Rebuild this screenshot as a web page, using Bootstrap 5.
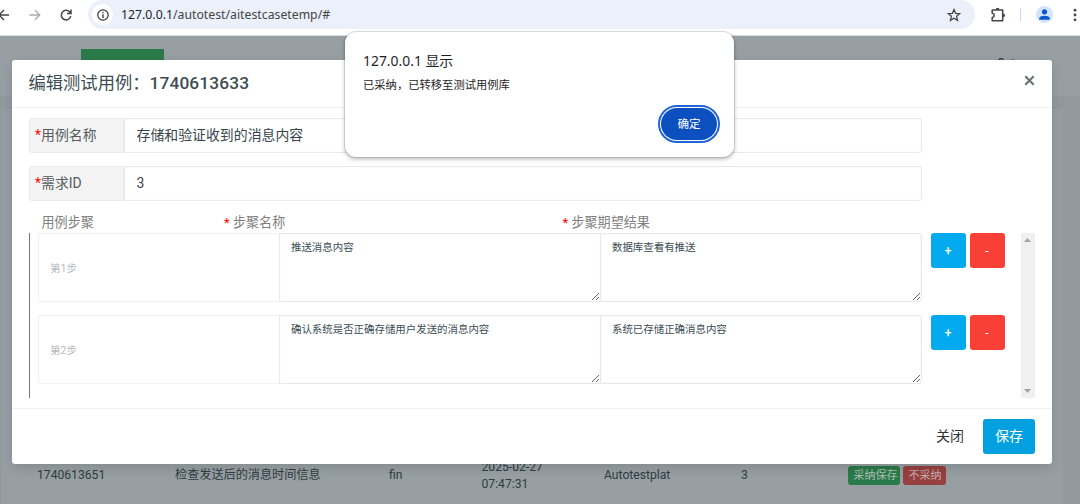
<!DOCTYPE html>
<html lang="zh-CN">
<head>
<meta charset="utf-8">
<title>编辑测试用例</title>
<link href="https://cdn.jsdelivr.net/npm/bootstrap@5.3.0/dist/css/bootstrap.min.css" rel="stylesheet">
<style>
  body{width:1080px;height:504px;overflow:hidden;background:#fff;font-family:Roboto,"Noto Sans CJK SC",sans-serif;font-size:12px;line-height:17px;color:#455a64}
  .browser-bar{height:36px;border-bottom:1px solid #d9dcdd;color:#444}
  .browser-bar svg{display:block;flex:none}
  .bar-row{height:29px}
  .address{margin-left:15px;width:887px;height:29px;border-radius:15px;background:#ebf0fa;font-family:"Noto Sans","Noto Sans CJK SC",sans-serif;font-size:12.280px}
  .site-info{width:21px;height:21px;background:#fff;margin-left:4px}
  .divider{width:1px;height:13px;background:#c5dbfb;margin-left:14px}
  .avatar{width:17px;height:17px;background:#d3e3fd;margin-left:15px}
  .page-area{height:468px;background:#979fa2}
  .top-nav{height:60px;padding:13px 0 0 81px}
  .active-tab{width:83px;height:47px;background:#2b7a49}
  .account{margin:9px 60px 0 0;color:#2c3539}
  .page-body{background:#929a9d;height:408px;padding:13px 17px 0 2px}
  .record-card{background:#979fa2;height:395px;padding-top:336px}
  .record-row{height:61px;color:#303c42;grid-template-columns:138px 214px 92.500px 122.500px 137px 106.500px 1fr;padding:0 0 0 35px;display:grid;align-items:center;font-size:12.150px}
  .mini{font-size:11px;line-height:17px;height:19px;border-radius:3px;padding:1px 4px 0 6px;color:#adc0b5;background:#2b7a49}
  .mini.no{background:#96403f;color:#c6acac}
  .edit-box{left:11.500px;top:60px;width:1040.500px;height:404px;border:0;border-radius:3px;box-shadow:0 4px 12px rgba(0,0,0,.13);background:#fff}
  .edit-box .modal-header{height:47.500px;padding:0 17px;border-bottom:1px solid #eff1f2}
  .edit-box .modal-title{font-size:17.300px;line-height:24px;color:#3e4d54;font-weight:400}
  .edit-box .modal-title b{font-weight:500;letter-spacing:.15px}
  .edit-box .modal-body{padding:10.500px 17px 0;flex:none;height:300.500px}
  .edit-box .modal-footer{height:56px;padding:0 17px 0 0;border-top:1px solid #eff1f2}
  .edit-box .modal-footer>*{margin:0}
  .field{width:893px;height:34.500px;margin-bottom:13.500px}
  .field .input-group-text{width:95px;margin-right:1px;background:#f4f4f4;border-color:#e8eaea;border-radius:3px;padding:0 5.500px;font-size:13.900px;color:#555b60}
  .field .form-control{border-color:#e9ebeb;border-radius:0 3px 3px 0!important;padding:0 12px;font-size:13.900px;line-height:20px;color:#38454b;box-shadow:inset 0 0 1px #e7e9e9}
  .red{color:#f00}
  .heads{height:19px;font-size:13.100px;line-height:17px;color:#808080;display:grid;grid-template-columns:182.500px 338.500px 1fr;padding-left:13px}
  .steps{height:165px;width:1006px;border-left:1px solid #777}
  .step-rows{width:977px;padding-left:8px}
  .step{height:69px;margin-bottom:13px}
  .step-name{width:241.500px;height:69px;border:1px solid #f1f2f2;border-right:0;border-radius:3px 0 0 3px;padding:1px 0 0 11.500px;font-size:10.500px;color:#b6bbbe}
  .step textarea{width:322px;height:69px;flex:none;margin-right:-1px;padding:6px 11px;border:1px solid #e8eaea;box-shadow:inset 0 0 1px #dfe1e1;border-radius:0;font-size:10.450px;line-height:16px;color:#3c4d55;resize:vertical}
  .step textarea.last{border-radius:0 3px 3px 0;margin-right:8.500px}
  .sq{width:35px;height:35px;padding:0;border:0;border-radius:3px;font-size:12px;font-weight:500;color:#fff;background:#03aaf0}
  .sq.minus{background:#f94037;margin-left:4px;font-weight:400}
  .scroll-track{width:14px;height:165px;background:#f0f0f0;padding:5px 0}
  .save{width:52px;height:35px;border:0;border-radius:3px;background:#03a0e0;color:#fff;padding:0;font-size:14px}
  .alert-box{left:345px;top:32px;width:389px;height:125px;border-radius:11px;background:#fff;box-shadow:0 0 0 1px rgba(100,110,115,.2),0 2px 4px rgba(0,0,0,.3);padding:18px;color:#1f1f1f;font-family:"Noto Sans","Noto Sans CJK SC",sans-serif}
  .confirm{right:17px;bottom:17.500px;width:56px;height:32px;border:0;border-radius:16px;background:#0b50be;color:#fff;font-size:11.500px;padding:0;outline:2px solid #2065d4;outline-offset:1px}
</style>
</head>
<body>
<header class="browser-bar">
  <div class="bar-row d-flex align-items-center">
    <svg width="12" height="14" viewBox="0 0 12 14" fill="none" stroke="#444" stroke-width="1.400"><path d="M9 7H-1M4 2-1 7l5 5"/></svg>
    <svg class="ms-3" width="14" height="14" viewBox="0 0 14 14" fill="none" stroke="#aaa" stroke-width="1.300"><path d="M1.500 7h10M7 2.300 11.700 7 7 11.700"/></svg>
    <svg style="margin-left:17px" width="14" height="14" viewBox="0 0 14 14" fill="none" stroke="#444" stroke-width="1.500"><path d="M11.800 8.200A4.800 4.800 0 1 1 10.500 3.700L12 5.300M12 1.500v4H8"/></svg>
    <div class="address d-flex align-items-center">
      <span class="site-info rounded-circle d-flex align-items-center justify-content-center"><svg width="12" height="12" viewBox="0 0 12 12"><circle cx="6" cy="6" r="5.200" fill="none" stroke="#333" stroke-width="1.200"/><path d="M6 5.200v3.700M6 2.900v1.300" stroke="#333" stroke-width="1.300"/></svg></span>
      <span class="ms-2"><span class="text-dark">127.0.0.1</span>/autotest/aitestcasetemp/#</span>
      <svg class="ms-auto" style="margin-right:14px" width="14" height="14" viewBox="0 0 14 14" fill="none" stroke="#444" stroke-width="1.250"><path d="m7 1.500 1.600 3.800 4.100.3-3.100 2.700 1 4.100L7 10.200l-3.600 2.200 1-4.100-3.100-2.700 4.100-.3z"/></svg>
    </div>
    <svg style="margin-left:15px" width="16" height="16" viewBox="0 0 16 16"><path d="M2.200 3h10.500v10.700H2.200v-3.200c2.800-.5 2.800-3.800 0-4.300z" fill="none" stroke="#444" stroke-width="1.500" stroke-linejoin="round"/><path d="M5.700 2.700a1.900 2 0 0 1 3.800 0zM13 6.400a2 1.900 0 0 1 0 3.800z" fill="#444"/></svg>
    <span class="divider"></span>
    <span class="avatar rounded-circle d-flex align-items-center justify-content-center"><svg width="11" height="11" viewBox="0 0 11 11" fill="#0b57d0"><circle cx="5.500" cy="2.800" r="2.600"/><path d="M.3 10.800V9.200C.3 5.900 10.700 5.900 10.700 9.200v1.600z"/></svg></span>
    <svg style="margin-left:20px" width="4" height="14" viewBox="0 0 4 14" fill="#444"><circle cx="2" cy="2.200" r="1.400"/><circle cx="2" cy="7" r="1.400"/><circle cx="2" cy="11.800" r="1.400"/></svg>
  </div>
</header>
<main class="page-area">
  <nav class="top-nav d-flex justify-content-between"><div class="active-tab"></div>
    <svg class="account" width="26" height="12" viewBox="0 0 26 12" fill="none" stroke="currentColor" stroke-width="1.200"><circle cx="7" cy="3.300" r="2.600"/><path d="M2 12c0-7 10-7 10 0"/><path d="M17 1.900h4" stroke-width=".6"/></svg></nav>
  <section class="page-body"><div class="record-card"><div class="record-row">
    <span>1740613651</span><span>检查发送后的消息时间信息</span><span>fin</span><span>2025-02-27<br>07:47:31</span><span>Autotestplat</span><span>3</span>
    <span class="d-flex"><span class="mini" style="width:52px;padding-right:0">采纳保存</span><span class="mini no" style="margin-left:3px;width:43.500px">不采纳</span></span>
  </div></div></section>
</main>

<div class="edit-box modal-content position-absolute">
  <div class="modal-header d-flex justify-content-between">
    <h5 class="modal-title">编辑测试用例：<b>1740613633</b></h5>
    <svg style="margin-top:-5px" width="11" height="11" viewBox="0 0 11 11" stroke="#697479" stroke-width="2.200"><path d="m1.300 1.300 8.400 8.400M9.700 1.300 1.300 9.700"/></svg>
  </div>
  <div class="modal-body">
    <div class="input-group flex-nowrap field"><label class="input-group-text"><span class="red">*</span>用例名称</label><input class="form-control" value="存储和验证收到的消息内容"></div>
    <div class="input-group flex-nowrap field"><label class="input-group-text"><span class="red">*</span>需求ID</label><input class="form-control" value="3"></div>
    <div class="heads"><span>用例步聚</span><span><span class="red">*</span> 步聚名称</span><span><span class="red">*</span> 步聚期望结果</span></div>
    <div class="steps d-flex justify-content-between">
      <div class="step-rows">
        <div class="step d-flex align-items-start"><div class="step-name d-flex align-items-center">第1步</div><textarea>推送消息内容</textarea><textarea class="last">数据库查看有推送</textarea><button class="btn sq">+</button><button class="btn sq minus">-</button></div>
        <div class="step d-flex align-items-start"><div class="step-name d-flex align-items-center">第2步</div><textarea>确认系统是否正确存储用户发送的消息内容</textarea><textarea class="last">系统已存储正确消息内容</textarea><button class="btn sq">+</button><button class="btn sq minus">-</button></div>
      </div>
      <div class="scroll-track d-flex flex-column justify-content-between align-items-center">
        <svg width="7" height="4" viewBox="0 0 7 4" fill="#a3a3a3"><path d="M0 4 3.500 0 7 4z"/></svg>
        <svg width="7" height="4" viewBox="0 0 7 4" fill="#a3a3a3"><path d="m0 0 3.500 4L7 0z"/></svg>
      </div>
    </div>
  </div>
  <div class="modal-footer d-flex justify-content-end align-items-center flex-nowrap">
    <span style="font-size:14px;color:#333;margin-right:19px">关闭</span><button class="btn save">保存</button>
  </div>
</div>

<div class="alert-box position-absolute">
  <div style="font-size:13.900px;line-height:21px">127.0.0.1 显示</div>
  <div style="font-size:11.300px;line-height:18px;margin-top:5px">已采纳，已转移至测试用例库</div>
  <button class="btn confirm position-absolute">确定</button>
</div>
<script src="https://cdn.jsdelivr.net/npm/bootstrap@5.3.0/dist/js/bootstrap.bundle.min.js"></script>
</body>
</html>
